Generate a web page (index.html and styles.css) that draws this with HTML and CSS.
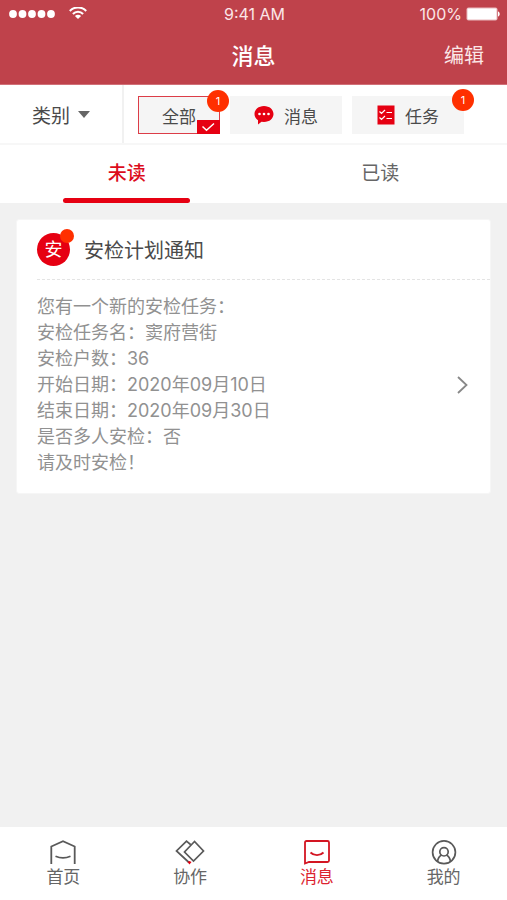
FILE: index.html
```html
<!DOCTYPE html>
<html lang="zh-CN">
<head>
<meta charset="utf-8">
<meta name="viewport" content="width=device-width, initial-scale=1">
<title>消息</title>
<link rel="stylesheet" href="styles.css">
</head>
<body>
<header class="header">
  <div class="status">
    <div class="signal">
      <svg width="46" height="10" viewBox="0 0 46 10" fill="#fff" aria-hidden="true"><circle cx="4" cy="5" r="3.900"/><circle cx="13.500" cy="5" r="3.900"/><circle cx="23" cy="5" r="3.900"/><circle cx="32.500" cy="5" r="3.900"/><circle cx="42" cy="5" r="3.900"/></svg>
      <svg width="18" height="14" viewBox="0 0 18 14" fill="none" stroke="#fff" stroke-width="2" aria-hidden="true"><path d="M.8 4C5.300-.8 12.700-.8 17.200 4M3.900 7C6.700 4 11.300 4 14.100 7"/><path d="M9 12 5.900 9C7.700 7.300 10.300 7.300 12.100 9Z" fill="#fff" stroke="none"/></svg>
    </div>
    <span>9:41 AM</span>
    <div class="power">
      <span>100%</span>
      <svg width="34" height="14" viewBox="0 0 34 14" aria-hidden="true"><rect x=".5" y=".5" width="31" height="13" rx="2" fill="#e9b9bd"/><rect x="1.500" y="1.500" width="29" height="11" rx="1" fill="#fff"/><path d="M32 4.500C34.300 5 34.300 9 32 9.500Z" fill="#fff"/></svg>
    </div>
  </div>
  <div class="title-bar">
    <h1 class="title">消息</h1>
    <button class="edit" type="button">编辑</button>
  </div>
</header>
<main class="main">
  <section class="filters">
    <button class="category" type="button">类别
      <svg width="12" height="7" viewBox="0 0 12 7" aria-hidden="true"><path d="M0 0H12L6 7Z" fill="#666"/></svg>
    </button>
    <div class="chips">
      <button class="chip chip-all" type="button">全部
        <svg class="check" width="23" height="14" viewBox="0 0 23 14" aria-hidden="true"><path d="M0 0H23V14H0Z" fill="#e60012"/><path d="M5.500 6.500 9.500 10.200 17 3.500" fill="none" stroke="#fff" stroke-width="1.500"/></svg>
        <span class="badge">1</span>
      </button>
      <button class="chip" type="button">
        <svg width="20" height="20" viewBox="0 0 20 20" aria-hidden="true"><path d="M10 1C15.500 1 19.500 4.600 19.500 9S15.500 17 10 17L7.500 16.700 4 19.500V15.200C1.800 13.700.5 11.500.5 9 .5 4.600 4.500 1 10 1Z" fill="#e60012"/><g fill="#fff"><circle cx="5.500" cy="9" r="1.300"/><circle cx="10" cy="9" r="1.300"/><circle cx="14.500" cy="9" r="1.300"/></g></svg>
        消息
      </button>
      <button class="chip" type="button">
        <svg width="18" height="20" viewBox="0 0 18 20" aria-hidden="true"><rect x=".5" y=".5" width="17" height="19" fill="#e60012"/><path d="M2.500 6.500 4.500 8.500 8 5M2.500 12.500 4.500 14.500 8 11M9.500 7.500H15M9.500 13.500H15" fill="none" stroke="#fff" stroke-width="1.200"/></svg>
        任务
        <span class="badge">1</span>
      </button>
    </div>
  </section>
  <nav class="tabs">
    <button class="tab tab-active" type="button">未读</button>
    <button class="tab" type="button">已读</button>
  </nav>
  <article class="card">
    <div class="card-head">
      <span class="avatar">安</span>
      <h2 class="card-title">安检计划通知</h2>
    </div>
    <div class="card-body">
      <div class="details">
        <p>您有一个新的安检任务：</p>
        <p>安检任务名：窦府营街</p>
        <p>安检户数：36</p>
        <p>开始日期：2020年09月10日</p>
        <p>结束日期：2020年09月30日</p>
        <p>是否多人安检：否</p>
        <p>请及时安检！</p>
      </div>
      <svg width="12" height="18" viewBox="0 0 12 18" fill="none" stroke="#888" stroke-width="1.800" aria-hidden="true"><path d="M2 1 10.500 9 2 17"/></svg>
    </div>
  </article>
</main>
<nav class="bottom">
  <a class="item" href="#home">
    <svg width="28" height="26" viewBox="0 0 28 26" fill="none" stroke="#595959" stroke-width="1.800" aria-hidden="true"><path d="M2.300 25V7.500L14 2.200 25.700 7.500V25M6.500 17.300C11 19.300 17 19.300 21.500 17.300"/></svg>
    首页
  </a>
  <a class="item" href="#work">
    <svg width="30" height="26" viewBox="0 0 30 26" fill="none" stroke="#595959" stroke-width="1.700" aria-hidden="true"><path d="M15.500 5.500 11.500 2.200 1.500 12 14 23.500M19.500 2.500 9.500 13 18.500 22 28.500 12Z"/><path d="M12.500 23 14.500 22 16.500 23 14.500 25.500Z" fill="#e60012" stroke="none"/></svg>
    协作
  </a>
  <a class="item item-active" href="#messages" aria-current="page">
    <svg width="28" height="26" viewBox="0 0 28 26" fill="none" stroke="#d31522" stroke-width="1.800" aria-hidden="true"><path d="M2 24.500V3.500Q2 2 3.500 2H24.500Q26 2 26 3.500V21.500Q26 23 24.500 23H6ZM7.500 13.500C11 17 17 17 20.500 13.500"/></svg>
    消息
  </a>
  <a class="item" href="#me">
    <svg width="26" height="26" viewBox="0 0 26 26" fill="none" stroke="#595959" stroke-width="1.700" aria-hidden="true"><circle cx="13" cy="13.300" r="11.400"/><circle cx="13" cy="12.800" r="4.200"/><path d="M6.500 22.600C7 19 8.500 17 10.500 16M19.500 22.600C19 19 17.500 17 15.500 16"/></svg>
    我的
  </a>
</nav>
</body>
</html>
```

FILE: styles.css
```css
* {
  box-sizing: border-box;
}

body {
  margin: 0;
  min-height: 100vh;
  display: flex;
  flex-direction: column;
  background: #f1f1f1;
  color: #4a4a4a;
  font-family: Inter, "Noto Sans CJK SC", sans-serif;
  font-size: 17px;
}

h1,
h2,
p {
  margin: 0;
}

button {
  padding: 0;
  border: 0;
  background: none;
  color: inherit;
  font: inherit;
}

svg {
  display: block;
  flex: none;
}

.header {
  background: #bf424b;
  border-bottom: 1px solid #d17078;
  color: #fff;
}

.status {
  display: grid;
  grid-template-columns: 1fr auto 1fr;
  align-items: center;
  height: 28px;
  padding: 0 7px 0 9px;
  font-size: 16px;
  line-height: 24px;
  color: #fbe6e7;
}

.signal,
.power {
  display: flex;
  align-items: center;
}

.signal {
  gap: 14px;
}

.power {
  gap: 4px;
  justify-content: flex-end;
}

.title-bar {
  display: grid;
  grid-template-columns: 1fr auto 1fr;
  align-items: center;
  height: 56px;
  padding: 0 23px;
}

.title {
  grid-column: 2;
  font-size: 22px;
  font-weight: 500;
  line-height: 32px;
}

.edit {
  justify-self: end;
  font-size: 20px;
  line-height: 32px;
  color: #fbe6e7;
}

.main {
  flex: 1;
}

.filters {
  display: flex;
  height: 60px;
  background: #fff;
  border-bottom: 2px solid #f7f7f7;
}

.category {
  display: flex;
  align-items: center;
  justify-content: center;
  gap: 8px;
  width: 124px;
  border-right: 2px solid #f1f1f1;
  font-size: 19px;
}

.chips {
  display: flex;
  align-items: center;
  gap: 10px;
  padding: 2px 14px 0;
}

.chip {
  position: relative;
  display: flex;
  align-items: center;
  justify-content: center;
  gap: 10px;
  width: 112px;
  height: 38px;
  background: #f5f5f5;
}

.chip-all {
  width: 82px;
  border: 1px solid #dc3d48;
}

.check {
  position: absolute;
  right: -1px;
  bottom: -1px;
}

.badge {
  position: absolute;
  top: -7px;
  right: -10px;
  width: 22px;
  height: 22px;
  border-radius: 50%;
  background: #ff3000;
  color: #fff;
  font-size: 11px;
  line-height: 22px;
  text-align: center;
}

.tabs {
  display: flex;
  height: 58px;
  background: #fff;
}

.tab {
  position: relative;
  flex: 1;
  padding-bottom: 5px;
  color: #666;
  font-size: 19px;
}

.tab-active {
  color: #dc0c1c;
  font-weight: 500;
}

.tab-active::after {
  content: "";
  position: absolute;
  left: 25%;
  right: 25%;
  bottom: 0;
  height: 5px;
  border-radius: 3px;
  background: #e60012;
}

.card {
  margin: 16px;
  padding-left: 20px;
  border: 1px solid #f6f6f6;
  border-radius: 3px;
  background: #fff;
}

.card-head {
  display: flex;
  align-items: center;
  gap: 14px;
  height: 60px;
  border-bottom: 1px dashed #e4e4e4;
}

.avatar {
  position: relative;
  width: 33px;
  height: 33px;
  border-radius: 50%;
  background: #e60012;
  color: #fff;
  font-size: 18px;
  line-height: 34px;
  text-align: center;
}

.avatar::after {
  content: "";
  position: absolute;
  top: -4px;
  right: -4px;
  width: 14px;
  height: 14px;
  border-radius: 50%;
  background: #ff3000;
}

.card-title {
  font-size: 20px;
  font-weight: 400;
}

.card-body {
  display: flex;
  align-items: center;
  justify-content: space-between;
  padding: 14px 22px 17px 0;
}

.details {
  color: #919191;
  font-size: 18px;
  line-height: 26px;
}

.bottom {
  display: flex;
  height: 73px;
  background: #fff;
}

.item {
  flex: 1;
  display: flex;
  flex-direction: column;
  align-items: center;
  padding-top: 12px;
  color: #666;
  line-height: 24px;
  text-decoration: none;
}

.item-active {
  color: #dc2430;
}
```
